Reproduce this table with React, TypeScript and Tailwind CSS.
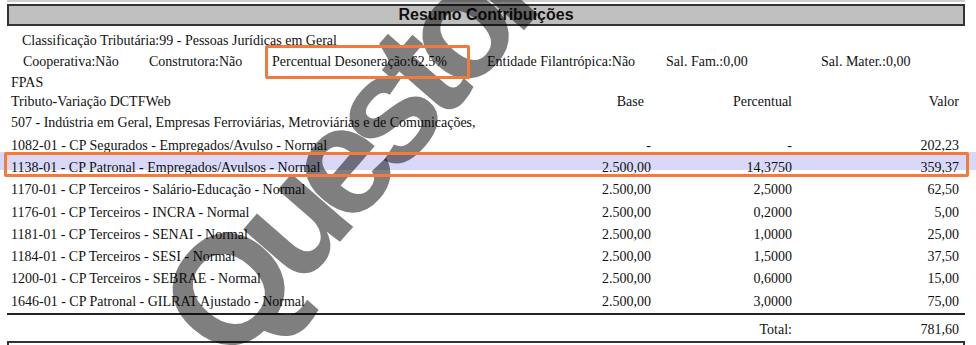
import React from 'react'

type Row = {
  desc: string
  base: string
  pct: string
  valor: string
  marked?: boolean
}

const rows: Row[] = [
  { desc: '1082-01 - CP Segurados - Empregados/Avulso - Normal', base: '-', pct: '-', valor: '202,23' },
  { desc: '1138-01 - CP Patronal - Empregados/Avulsos - Normal', base: '2.500,00', pct: '14,3750', valor: '359,37', marked: true },
  { desc: '1170-01 - CP Terceiros - Salário-Educação - Normal', base: '2.500,00', pct: '2,5000', valor: '62,50' },
  { desc: '1176-01 - CP Terceiros - INCRA - Normal', base: '2.500,00', pct: '0,2000', valor: '5,00' },
  { desc: '1181-01 - CP Terceiros - SENAI - Normal', base: '2.500,00', pct: '1,0000', valor: '25,00' },
  { desc: '1184-01 - CP Terceiros - SESI - Normal', base: '2.500,00', pct: '1,5000', valor: '37,50' },
  { desc: '1200-01 - CP Terceiros - SEBRAE - Normal', base: '2.500,00', pct: '0,6000', valor: '15,00' },
  { desc: '1646-01 - CP Patronal - GILRAT Ajustado - Normal', base: '2.500,00', pct: '3,0000', valor: '75,00' },
]

const cols = 'grid grid-cols-[1fr_140px_141px_167px] pr-[17px] pl-[11px] items-center'

const App: React.FC = () => {
  return (
    <div className="relative w-[976px] h-[345px] overflow-hidden bg-white text-[14px] text-[#111] font-['Liberation_Serif','Times_New_Roman',serif]">
      {/* previous section edge */}
      <div className="ml-[7px] mr-[11px] h-[2px] bg-[#cfcfcf]" />

      {/* title bar */}
      <div className="mt-[2px] ml-[7px] mr-[11px] h-[22px] border-2 border-[#333] bg-[#c0c0c0] flex items-center justify-center">
        <span className="font-['Liberation_Sans',Arial,sans-serif] font-bold text-[16px] leading-none text-[#111]">
          Resumo Contribuições
        </span>
      </div>

      <div className="h-[24px] flex items-center pl-[22px] pt-[4px] whitespace-nowrap">
        Classificação Tributária:99 - Pessoas Jurídicas em Geral
      </div>

      <div className="relative h-[22px] flex items-center pl-[23px] pt-[1px] whitespace-nowrap">
        <span className="w-[126px]">Cooperativa:Não</span>
        <span className="w-[123px]">Construtora:Não</span>
        <span className="w-[215px]">Percentual Desoneração:62.5%</span>
        <span className="w-[179px]">Entidade Filantrópica:Não</span>
        <span className="w-[155px]">Sal. Fam.:0,00</span>
        <span>Sal. Mater.:0,00</span>
        <div className="absolute z-20 left-[265px] top-[-5px] w-[205px] h-[34px] border-[3px] border-[#f47a3a] rounded-[2px]" />
      </div>

      <div className="h-[19px] flex items-center pl-[11px] pt-[1px]">FPAS</div>

      <div className={`${cols} h-[20px]`}>
        <span>Tributo-Variação DCTFWeb</span>
        <span className="text-right pr-[7px]">Base</span>
        <span className="text-right">Percentual</span>
        <span className="text-right">Valor</span>
      </div>

      <div className="h-[23px] flex items-center pl-[11px] whitespace-nowrap">
        507 - Indústria em Geral, Empresas Ferroviárias, Metroviárias e de Comunicações,
      </div>

      {rows.map((r) => (
        <div key={r.desc} className={`relative ${cols} h-[22.3px] whitespace-nowrap`}>
          {r.marked && (
            <>
              <div className="absolute left-0 right-0 top-[-4px] h-[18px] bg-[#d8d8f8]" />
              <div className="absolute z-20 left-[4px] right-[7px] top-[-4px] h-[25px] border-[3px] border-[#f47a3a] rounded-[2px]" />
            </>
          )}
          <span className="relative">{r.desc}</span>
          <span className="relative text-right">{r.base}</span>
          <span className="relative text-right">{r.pct}</span>
          <span className="relative text-right">{r.valor}</span>
        </div>
      ))}

      <div className="ml-[7px] mr-[11px] h-[2px] bg-[#222] mt-[1px]" />

      <div className={`${cols} h-[26px] pt-[2px]`}>
        <span />
        <span />
        <span className="text-right">Total:</span>
        <span className="text-right">781,60</span>
      </div>

      <div className="ml-[7px] mr-[11px] h-[24px] border-2 border-[#333] bg-white" />

      {/* watermark */}
      <span className="pointer-events-none absolute z-10 left-[348px] top-[152px] -translate-x-1/2 -translate-y-1/2 -rotate-[49deg] whitespace-nowrap font-['Liberation_Sans',Arial,sans-serif] font-bold text-[154px] tracking-[-0.1em] leading-none text-black/50">
        Questor
      </span>
    </div>
  )
}

export default App
